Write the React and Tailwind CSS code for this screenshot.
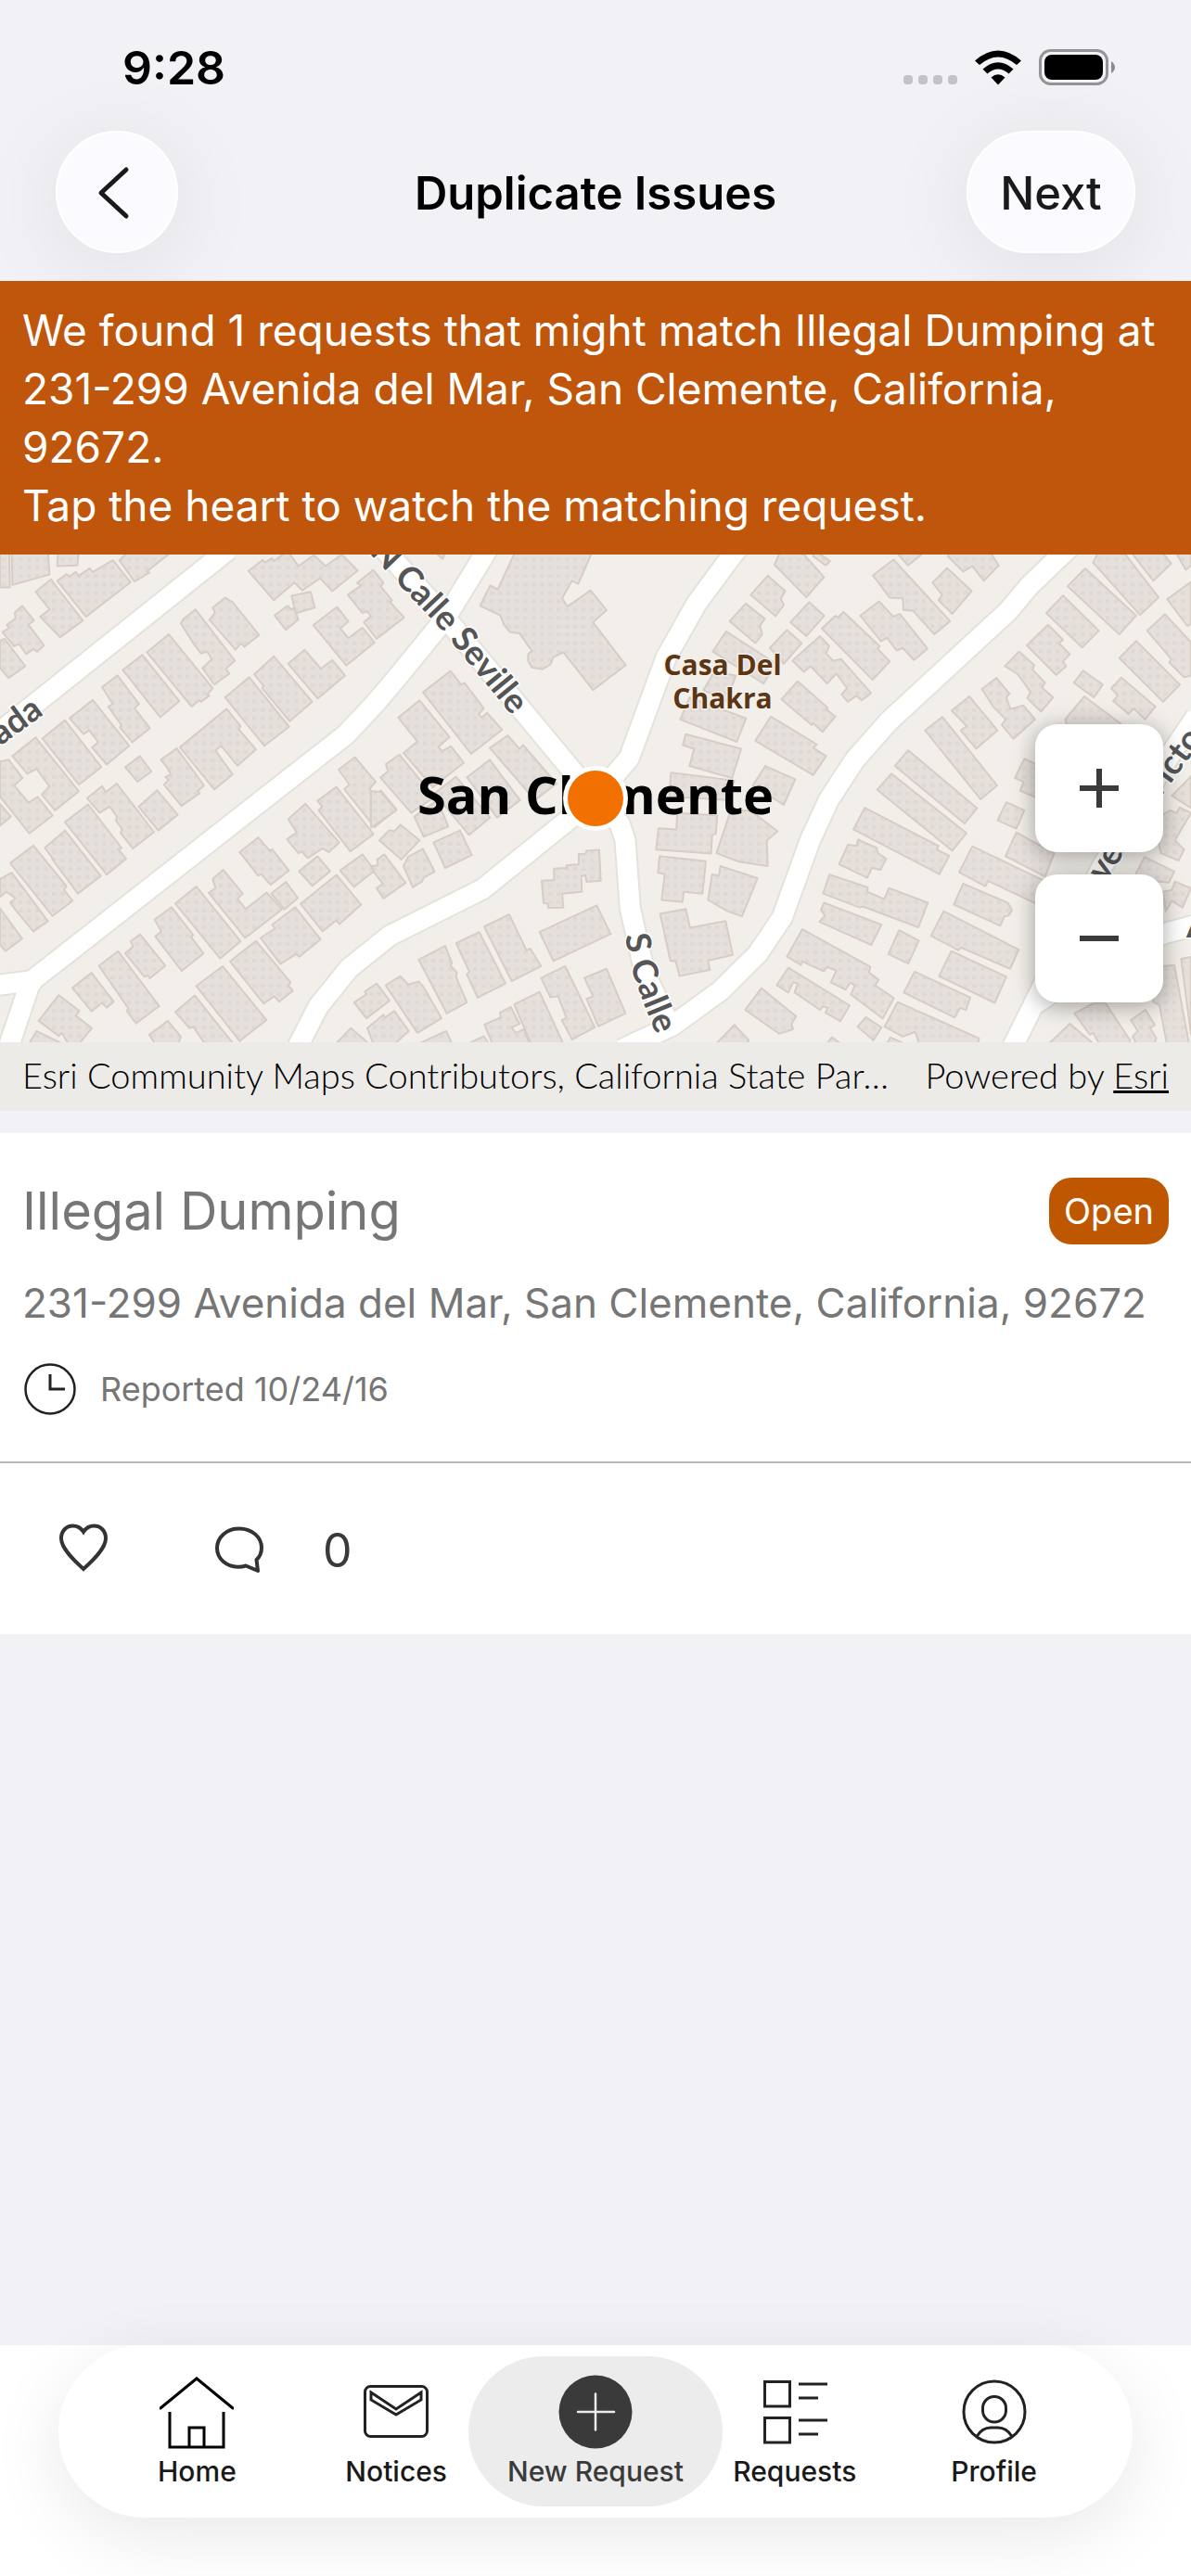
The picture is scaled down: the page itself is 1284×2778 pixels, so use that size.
const A = [
  "0,10 30,10 32,110 0,110", "38,10 155,10 160,75 40,103", "188,10 255,10 250,50 185,52",
  "115,122 165,88 180,105 268,200 195,246 165,220 130,190 160,170",
  "185,92 215,74 225,80 245,68 255,78 290,58 300,68 365,36 422,96 278,190",
  "386,36 420,10 560,10 475,66 483,70 435,94",
  "8,232 30,220 22,212 50,195 48,178 72,160 110,200 92,212 142,268 120,286 108,278 85,292 62,265 45,270",
  "0,255 15,250 82,325 28,357 0,330",
  "585,208 595,195 632,170 760,310 730,332 742,345 693,375 655,330 685,305 670,285 650,290 625,262",
  "677,198 695,180 688,165 728,138 752,150 838,240 790,272 780,262 762,280",
  "475,287 546,238 688,385 670,402 677,405 650,422 645,417 620,435",
  "397,335 460,294 580,420 518,464",
  "330,382 380,350 450,428 435,440 485,494 428,532 388,492 392,485 350,435 365,428",
  "225,467 300,417 418,542 345,593 298,547 318,532 288,500 270,510",
  "137,522 210,472 328,600 255,648",
  "40,570 115,519 255,666 178,718 135,675 160,652 118,605 88,618",
  "0,585 28,580 73,630 46,650 92,697 122,681 170,732 95,781 0,680",
  "0,700 35,735 0,760", "405,600 452,570 490,612 445,640",
  "282,685 330,652 342,668 378,645 498,777 430,822 390,780 395,770 375,745 378,735 355,708 322,725",
  "210,750 285,702 393,820 383,825 408,850 345,893", "145,820 210,773 326,897 252,945 168,850 175,855",
  "33,862 108,814 215,925 207,935 235,965 170,1006",
  "0,905 38,888 155,1020 108,1048 60,1000 33,970 50,958 20,940 0,955", "0,985 72,1068 18,1102 0,1085",
  "520,580 572,549 660,650 640,665 645,672 587,706 530,648 545,635 535,627 552,620 540,600",
  "582,546 733,441 778,488 772,497 828,552 768,596 715,542 697,555 752,620 693,661",
  "728,410 806,355 935,490 855,542", "822,347 886,298 1010,422 937,475 848,385 852,378",
  "932,318 985,280 1038,332 1075,308 1116,350 1028,413", "448,708 508,663 575,730 512,773",
  "803,65 850,35 857,42 880,30 886,38 930,10 965,52 1015,22 1053,52 1105,20 1157,64 1075,120 1035,85 978,118 952,97 886,145",
  "943,133 1005,122 1018,165 957,180", "888,186 930,160 942,170 950,167 965,197 925,226",
  "1013,213 1090,163 1127,203 1100,222 1127,248 1172,220 1212,260 1120,323",
  "1125,130 1167,105 1155,98 1207,62 1240,97 1232,108 1268,145 1262,150 1307,192 1218,250 1177,205 1200,188 1187,175 1172,180",
  "775,832 835,792 872,828 880,824 935,882 875,921 845,892 835,896",
  "688,905 722,880 785,945 768,960 795,987 862,942 912,988 793,1066 675,943 697,930",
  "567,972 635,926 778,1075 712,1122", "500,1016 555,982 625,1058 618,1063 658,1108 588,1156 502,1062 522,1048",
  "405,1108 430,1090 423,1075 453,1056 535,1142 485,1176 478,1168 467,1172",
  "320,1142 382,1102 515,1252 440,1299 410,1265 415,1258", "234,1202 296,1161 368,1240 345,1256 330,1243 296,1266",
  "125,1292 190,1222 257,1265 245,1278 297,1312 250,1360 225,1360 200,1325 190,1333", "90,1360 118,1320 215,1360",
  "483,1330 543,1292 585,1335 575,1360 505,1360", "567,1268 630,1223 760,1360 660,1351 625,1308 613,1312",
  "635,1197 720,1143 862,1290 775,1347",
  "744,1130 828,1074 940,1187 932,1195 947,1210 903,1240 887,1225 853,1245",
  "843,1066 890,1040 880,1030 955,982 1037,1070 968,1117 957,1110 907,1137", "877,945 925,913 963,957 920,988",
  "972,973 1088,894 1168,975 1098,1028 1087,1018 1043,1048", "967,884 1027,843 1068,884 1010,924",
  "1100,882 1172,838 1212,882 1145,927",
  "932,742 988,700 1097,806 1063,832 1043,822 995,848 975,830 965,835 928,797 960,778",
  "1027,692 1088,654 1208,783 1133,830 1030,718 1042,708",
  "1095,607 1148,573 1215,640 1195,660 1210,676 1232,664 1282,715 1212,764 1113,660 1130,648",
  "1145,1242 1185,1220 1180,1212 1218,1190 1260,1237 1185,1285", "1080,1360 1135,1312 1200,1360",
];

const B = [
  "200,10 237,20 232,32",
  "468,10 717,10 670,100 650,92 618,140 635,162 710,118 762,172 718,205 824,322 718,390 622,287 590,300 580,320 555,333 520,328 508,310 508,292 520,283 480,235 450,232 430,212 418,186 353,160 385,105 410,115",
  "168,396 257,338 292,375 302,370 365,440 348,455 358,465 375,452 424,498 324,564",
  "88,465 157,418 254,518 218,545 230,557 258,543 300,588 200,655 105,562 150,530",
  "30,628 55,612 48,592 92,566 205,682 130,725", "384,548 442,514 480,550 492,540 600,645 530,690",
  "310,628 384,580 482,690 408,738", "205,672 275,626 385,738 317,785", "140,735 215,690 250,762 170,790",
  "27,800 60,772 75,775 95,757 157,800 98,852", "202,805 288,773 326,840 240,875",
  "105,870 120,845 168,823 206,885 170,902 165,912 135,928",
  "0,870 22,868 20,852 43,838 112,916 40,958 18,930 38,918 12,890", "0,665 32,668 82,718 0,765",
  "552,910 592,908 592,877 632,875 632,868 672,865 672,838 695,836 697,828 738,826 743,910 697,913 693,895 680,897 682,940 618,945 622,983 573,984 572,973 558,970",
  "545,1050 730,977 775,1055 590,1129", "366,1035 447,1002 503,1100 515,1095 550,1143 455,1184",
  "275,1080 350,1050 435,1190 345,1229 310,1165 318,1158",
  "154,1125 240,1088 262,1135 257,1142 278,1160 275,1172 310,1242 245,1272",
  "47,1195 95,1170 120,1193 155,1185 170,1200 228,1285 150,1325",
  "-12,1312 40,1275 45,1283 75,1265 122,1320 70,1360 10,1360", "140,1360 243,1320 265,1360", "300,1360 365,1334 385,1360",
  "367,1302 420,1282 417,1270 452,1254 480,1300 455,1310 468,1325 495,1315 515,1360 395,1360",
  "463,1247 545,1213 625,1360 520,1360",
  "550,1175 628,1143 724,1310 650,1343 617,1290 632,1283 605,1225 580,1228",
  "690,1175 762,1150 823,1272 735,1307 697,1232 718,1225",
  "1228,130 1283,78 1340,120 1325,140 1335,158 1308,188", "1160,202 1212,154 1273,195 1258,215 1265,238 1243,262",
  "1105,285 1148,230 1310,318 1270,372", "1075,390 1110,340 1180,350 1150,420", "1000,470 1030,410 1213,467 1183,531",
  "1008,540 1018,510 1197,550 1168,630 1030,597 1045,550", "970,615 1175,637 1150,690 965,680",
  "1243,528 1293,462 1442,538 1430,548 1472,570 1430,622", "1235,650 1275,597 1372,633 1335,703",
  "990,725 1120,732 1115,782 1103,785 1100,836 922,825 930,767 988,770",
  "1165,715 1230,720 1315,775 1280,800 1283,870 1190,858 1117,835",
  "933,843 1083,857 1072,945 1012,940 1007,968 940,962 950,892 928,888",
  "1130,870 1250,903 1200,1007 1150,992 1090,962 1103,893 1125,896",
  "935,1000 1018,987 1032,1038 1147,1020 1170,1112 1090,1128 1096,1153 998,1170 985,1130 968,1128",
  "1210,1262 1263,1203 1375,1280 1360,1300 1365,1315 1320,1327", "1110,1360 1175,1303 1222,1345 1210,1360",
];

const C = [
  "15,48 35,10 110,20 175,82 118,137", "145,10 195,38 180,50 140,25", "66,205 127,150 176,187 118,243",
  "0,275 55,226 103,262 45,318",
  "73,310 162,243 192,270 182,290 205,310 230,305 327,398 297,418 280,405 252,422 232,402 250,385 215,345 185,372 132,325 110,340",
  "168,222 212,187 220,192 238,177 355,270 348,277 388,312 332,362",
  "292,187 353,148 400,190 420,182 510,277 466,308 430,275 410,282 378,247 360,257",
  "333,77 400,34 583,202 532,238 462,173 432,172 430,140 388,138", "415,20 485,10 490,20 447,50",
  "526,97 573,57 653,120 590,182 545,145 557,130", "575,25 590,10 710,10 740,50 692,92 655,52 625,67",
  "37,415 90,366 187,438 182,443 212,462 170,504 140,480 135,485", "588,446 645,407 736,500 667,550 617,500 637,488",
  "502,500 558,463 735,650 682,688", "404,597 447,554 670,712 630,754", "347,662 393,618 636,780 590,828",
  "270,770 307,711 545,815 540,825 580,842 548,892",
  "224,865 252,812 280,815 285,798 345,820 350,835 376,850 358,880 330,875 315,902",
  "172,945 193,893 317,928 315,940 370,960 385,930 511,970 480,1037 300,980 290,983",
  "175,970 361,1030 328,1085 160,1022 178,1005 165,990",
  "55,1117 105,1042 325,1145 320,1160 352,1180 340,1195 401,1230 365,1286 262,1220 275,1195 260,1188 245,1207 197,1187 215,1155 185,1145 175,1157 105,1130 100,1140",
  "22,1195 60,1147 258,1250 228,1293 180,1270 187,1257 172,1252 162,1262 80,1215 90,1190 75,1187 60,1215",
  "383,1110 418,1045 482,1073 448,1136", "284,1308 310,1282 361,1310 335,1345",
  "371,1308 413,1241 677,1340 670,1360 485,1360 470,1322 430,1335", "433,1215 468,1158 648,1228 635,1262 615,1257 598,1283",
  "180,1360 200,1337 240,1360", "375,1360 390,1337 450,1360",
  "547,1170 587,1102 765,1172 727,1243", "521,1060 562,993 805,1098 777,1150 618,1092 610,1100",
  "595,975 625,918 770,970 783,990 772,1005 758,1008 745,1033", "612,887 655,816 900,915 860,972 705,910 697,925",
  "736,745 765,696 823,718 797,768", "762,843 797,778 920,835 890,898", "792,630 823,577 880,600 880,690 810,665 820,640",
  "686,387 733,357 775,400 765,410 778,442 820,432 858,470 788,523 750,485 763,470 722,435",
  "760,325 806,285 855,322 850,335 890,370 880,383 916,410 877,449 832,412 843,395 800,345",
  "831,268 900,212 948,253 935,262 970,292 948,312 958,325 926,349", "894,180 948,132 1064,228 1010,274",
  "963,107 1020,58 1185,187 1130,238", "1045,42 1065,10 1150,20 1257,137 1197,185", "1165,10 1265,10 1298,45 1240,92",
  "1285,142 1362,95 1362,210 1350,215", "1220,228 1278,183 1362,260 1362,350 1340,355 1292,315 1298,305",
  "1130,303 1185,256 1326,375 1272,422",
  "1104,385 1137,356 1247,435 1213,470 1177,440 1160,455 1110,420 1125,405", "983,370 1013,337 1077,375 1048,410",
  "955,470 1017,407 1140,485 960,485", "1310,10 1362,10 1362,50 1345,62", "1300,678 1362,625 1362,712",
  "1240,745 1295,718 1315,725 1325,710 1362,725 1310,800 1340,825 1322,855 1265,835", "1185,888 1212,845 1308,885 1290,915 1180,905",
  "1272,940 1300,935 1310,912 1362,930 1335,983 1300,965 1280,993",
  "1240,1240 1250,1145 1308,1140 1357,1360 1285,1360 1260,1250", "1330,1123 1362,1118 1362,1330",
  "985,1272 1050,1243 1085,1243 1165,1345 1160,1360 1070,1360 1045,1325 1035,1330",
  "1167,1290 1215,1262 1245,1303 1230,1312 1250,1340 1240,1360 1190,1360 1173,1335 1190,1320",
  "895,1360 970,1300 1055,1360",
];

const ROADS = [
  "M740,6 L-20,517",
  "M1595,-20 L1560,30 L1440,195 L1290,350 L1215,425 L1118,512 L110,1178 L95,1195 L25,1370",
  "M-20,1196 L110,1182",
  "M1215,-20 L1440,192 L1925,685",
  "M2395,-5 L2370,20 L2252,155 L2155,300 L2035,575 L1925,685 L1562,932 L1260,1060 L1130,1148 L1030,1252 L940,1400",
  "M1925,685 L2005,755 L2022,800 L2038,985 L2085,1160 L2175,1320",
  "M2010,1370 L2175,1305 L2330,1210 L2450,1110 L2530,1010 L2620,800 L2680,690 L2765,580 L2875,475 L3260,175 L3330,105 L3460,0",
  "M3265,1380 L3350,1235 L3565,870 L3790,560 L3870,460",
  "M3350,1245 L3450,1190 L3762,1055 L3870,1030",
];

function Blocks({ items, shift }) {
  return (
    <g transform={`translate(${shift} 0)`}>
      {items.map((p) => (
        <polygon key={p} points={p} fill="url(#hatch)" stroke="#d8cdc5" strokeWidth="2" vectorEffect="non-scaling-stroke" />
      ))}
    </g>
  );
}

function StreetMap() {
  return (
    <svg viewBox="0 0 1284 526" preserveAspectRatio="xMidYMid slice" className="block h-[526px] w-full bg-[#f2efea]" role="img" aria-label="Map of San Clemente">
      <defs>
        <pattern id="hatch" width="27" height="22.8" patternUnits="userSpaceOnUse">
          <rect width="27" height="22.8" fill="#e5e0db" />
          <rect x="6" y="6" width="13" height="10" fill="#ded9d4" />
        </pattern>
        <path id="seville" d="M388,-28 L480,69 L573,182 L642,253" />
        <path id="calle" d="M682,395 L690,440 L704,480 L735,556" />
        <path id="victoria" d="M1174,362 L1230,272 L1320,150" />
      </defs>
      <g transform="translate(0 -8) scale(0.33333 0.39541)" strokeLinejoin="round">
        {ROADS.map((d) => (
          <path key={d} d={d} fill="none" stroke="#e3e2dc" strokeWidth="25" vectorEffect="non-scaling-stroke" />
        ))}
        {ROADS.map((d) => (
          <path key={d} d={d} fill="none" stroke="#ffffff" strokeWidth="21" vectorEffect="non-scaling-stroke" />
        ))}
        <Blocks items={A} shift={0} />
        <Blocks items={B} shift={1200} />
        <Blocks items={C} shift={2490} />
      </g>
      <g className="font-['Lato',sans-serif] text-[37px] font-bold" fill="#555555" stroke="#ffffff" strokeWidth="3" paintOrder="stroke">
        <text dy="11"><textPath href="#seville" startOffset="26">N Calle Seville</textPath></text>
        <text dy="11"><textPath href="#calle" startOffset="14">S Calle</textPath></text>
        <text dy="11"><textPath href="#victoria" startOffset="16">ve</textPath></text>
        <text dy="11"><textPath href="#victoria" startOffset="118">Victoria</textPath></text>
        <text x="48" y="172" textAnchor="end" transform="rotate(-36 48 172)">ada</text>
        <text x="1279" y="413">A</text>
      </g>
      <g className="font-['Open_Sans',sans-serif] text-[30px] font-bold" fill="#5c3512" stroke="#f2efea" strokeWidth="3" paintOrder="stroke" textAnchor="middle">
        <text x="779" y="130">Casa Del</text>
        <text x="779" y="166">Chakra</text>
      </g>
      <text x="642" y="280" textAnchor="middle" className="font-['Open_Sans',sans-serif] text-[56px] font-bold" fill="#000000">San Clemente</text>
      <circle cx="642" cy="263" r="35" fill="#ffffff" />
      <circle cx="642" cy="263" r="30" fill="#f27000" />
    </svg>
  );
}

function StatusBar() {
  return (
    <div className="flex h-[141px] items-start justify-between pt-[42px] pr-[82px] pl-[132px]">
      <time className="text-[50px] leading-[62px] font-semibold">9:28</time>
      <div className="flex h-[62px] items-center gap-[19px]">
        <svg viewBox="0 0 58 40" className="h-10 w-[58px]" aria-hidden="true">
          {[0, 16, 32, 48].map((x) => (
            <rect key={x} x={x} y="28" width="10" height="10" rx="4" fill="#c3c2c7" />
          ))}
        </svg>
        <svg viewBox="0 0 50 38" className="h-[38px] w-[50px]" aria-hidden="true">
          <path d="M0 11.500 Q25 -10.500 50 11.500 L45 16 Q25 -1 5 16 Z" />
          <path d="M8.500 20.500 Q25 6 41.500 20.500 L36.500 25.500 Q25 15.500 13.500 25.500 Z" />
          <path d="M17.500 29.500 Q25 23 32.500 29.500 L25 37.500 Z" />
        </svg>
        <svg viewBox="0 0 82 40" className="h-10 w-[82px]" aria-hidden="true">
          <rect x="1.500" y="1.500" width="72" height="36" rx="11" fill="none" stroke="#949397" strokeWidth="3" />
          <rect x="6" y="6" width="63" height="27" rx="8" />
          <path d="M78 13 Q82 16 82 19.500 Q82 23 78 26 Z" fill="#8b8a8e" />
        </svg>
      </div>
    </div>
  );
}

function HomeIcon() {
  return (
    <svg viewBox="0 0 80 80" className="size-20" fill="none" stroke="#000" strokeWidth="3" aria-hidden="true">
      <path d="M1 36 L40 4 L79 36" strokeLinecap="round" />
      <path d="M11 40 V78 H69 V40 M32 78 V57 H48 V78" />
    </svg>
  );
}

function NoticesIcon() {
  return (
    <svg viewBox="0 0 80 80" className="size-20" fill="none" stroke="#222" strokeWidth="3" aria-hidden="true">
      <rect x="6.500" y="12.500" width="67" height="54" rx="6" />
      <path d="M13 19 L40 37 L67 19 V27 L40 43 L13 27 Z" />
    </svg>
  );
}

function NewIcon() {
  return (
    <svg viewBox="0 0 80 80" className="size-20" aria-hidden="true">
      <circle cx="40" cy="40" r="39.500" fill="#3a3a3a" />
      <path d="M21 40 H60 M40 20.500 V59.500" stroke="#ececec" strokeWidth="2.500" strokeLinecap="round" />
    </svg>
  );
}

function RequestsIcon() {
  return (
    <svg viewBox="0 0 80 80" className="size-20" fill="none" stroke="#222" strokeWidth="3" aria-hidden="true">
      <path d="M7.500 7.500 H34.500 V34 H7.500 Z M7.500 46.500 H34.500 V73 H7.500 Z" />
      <path d="M44 10 H75 M44 25 H65 M44 49 H75 M44 64 H65" />
    </svg>
  );
}

function ProfileIcon() {
  return (
    <svg viewBox="0 0 80 80" className="size-20" fill="none" stroke="#222" strokeWidth="3" aria-hidden="true">
      <circle cx="40" cy="40" r="33" />
      <rect x="27.500" y="23.500" width="25" height="27.500" rx="12.500" />
      <path d="M21 66.500 C25 60 29 57 36 57 H44 C51 57 55 60 59 66.500" />
    </svg>
  );
}

const TABS = [
  { name: "Home", Icon: HomeIcon },
  { name: "Notices", Icon: NoticesIcon },
  { name: "New Request", Icon: NewIcon, active: true },
  { name: "Requests", Icon: RequestsIcon },
  { name: "Profile", Icon: ProfileIcon },
];

export default function App() {
  return (
    <div className="flex min-h-screen flex-col overflow-hidden bg-[#f2f1f6] font-['Inter',sans-serif] text-black">
      <StatusBar />
      <header className="flex items-center justify-between px-[60px] pb-[30px]">
        <div className="flex flex-1">
          <button type="button" aria-label="Back" className="grid size-[132px] place-items-center rounded-full border-2 border-white bg-[#fafaff] shadow-[0_12px_100px_rgba(0,0,0,0.08)]">
            <svg viewBox="0 0 40 60" className="mr-2 h-[60px] w-10" fill="none" stroke="#1a1a1c" strokeWidth="5" strokeLinecap="round" strokeLinejoin="round" aria-hidden="true">
              <path d="M34 6 L7 31 L34 56" />
            </svg>
          </button>
        </div>
        <h1 className="pt-1 text-[49px] leading-[60px] font-semibold">Duplicate Issues</h1>
        <div className="flex flex-1 justify-end">
          <button type="button" className="h-[132px] w-[182px] rounded-full border-2 border-white bg-[#fafaff] pt-1 text-[49px] font-medium text-[#1a1a1c] shadow-[0_12px_100px_rgba(0,0,0,0.08)]">Next</button>
        </div>
      </header>

      <main className="flex-1">
        <p className="bg-[#c0560c] px-6 pt-[22px] pb-[21px] text-[46px] leading-[63px] text-white">
          We found 1 requests that might match Illegal Dumping at 231-299 Avenida del Mar, San Clemente, California, 92672.
          <br />
          Tap the heart to watch the matching request.
        </p>

        <section className="relative" aria-label="Map">
          <StreetMap />
          <div className="absolute right-[30px] bottom-[117px] flex flex-col gap-6">
            <button type="button" aria-label="Zoom in" className="grid size-[138px] place-items-center rounded-3xl bg-white shadow-[0_4px_24px_rgba(0,0,0,0.35)]">
              <svg viewBox="0 0 42 42" className="size-[42px]" stroke="#3a3a3a" strokeWidth="6" aria-hidden="true"><path d="M0 21 H42 M21 0 V42" /></svg>
            </button>
            <button type="button" aria-label="Zoom out" className="grid size-[138px] place-items-center rounded-3xl bg-white shadow-[0_4px_24px_rgba(0,0,0,0.35)]">
              <svg viewBox="0 0 42 42" className="size-[42px]" stroke="#3a3a3a" strokeWidth="6" aria-hidden="true"><path d="M0 21 H42" /></svg>
            </button>
          </div>
          <div className="flex h-[74px] items-center justify-between gap-6 bg-[#edebe8] px-6 pb-1 font-['Lato',sans-serif] text-[38px] font-light">
            <span className="truncate">Esri Community Maps Contributors, California State Par…</span>
            <span className="whitespace-nowrap">Powered by <a href="#esri" className="underline">Esri</a></span>
          </div>
        </section>

        <article className="mt-6 bg-white">
          <div className="px-6 pt-12 pb-12 text-[#767676]">
            <div className="flex items-center justify-between">
              <h2 className="text-[56px] leading-[72px]">Illegal Dumping</h2>
              <span className="rounded-3xl bg-[#bf5700] px-4 text-[38px] leading-[72px] text-white">Open</span>
            </div>
            <p className="mt-8 text-[44px] leading-[62px]">231-299 Avenida del Mar, San Clemente, California, 92672</p>
            <div className="mt-8 flex items-center gap-6">
              <svg viewBox="0 0 60 60" className="size-[60px]" fill="none" stroke="#222" strokeWidth="2.500" aria-hidden="true">
                <circle cx="30" cy="30" r="26.500" />
                <path d="M30 14 V30 H46" strokeWidth="3" />
              </svg>
              <p className="text-[36px] leading-[60px]">Reported 10/24/16</p>
            </div>
          </div>
          <div className="flex h-[186px] items-center border-t-2 border-[#b8b8b8] px-[60px]">
            <button type="button" aria-label="Watch" className="mr-[108px]">
              <svg viewBox="0 0 60 60" className="size-[60px]" fill="none" stroke="#333" strokeWidth="4" aria-hidden="true">
                <path d="M30 52 C20 43 6 30 6 19 C6 11 11.500 5.500 18.500 5.500 C23.500 5.500 27.500 8 30 12 C32.500 8 36.500 5.500 41.500 5.500 C48.500 5.500 54 11 54 19 C54 30 40 43 30 52 Z" />
              </svg>
            </button>
            <button type="button" aria-label="Comments" className="flex items-center gap-[60px] text-[50px] text-[#3a3a3a]">
              <svg viewBox="0 0 60 60" className="size-[60px]" fill="none" stroke="#333" strokeWidth="4" strokeLinejoin="round" aria-hidden="true">
                <path d="M30 8.500 C44 8.500 54 18 54 29 C54 34.500 52 39 48.500 42 L50 54 L37 48.500 C34 49.500 33 49.800 30 49.800 C16 49.800 6 41 6 29.500 C6 18 16 8.500 30 8.500 Z" />
              </svg>
              <span className="pt-1">0</span>
            </button>
          </div>
        </article>
      </main>

      <footer className="bg-white px-[63px] pb-[63px]">
        <nav className="grid grid-cols-5 rounded-full bg-white px-[42px] py-3 shadow-[0_20px_80px_rgba(0,0,0,0.09)]">
          {TABS.map(({ name, Icon, active }) => (
            <a key={name} href={`#${name}`} className="relative flex h-[162px] flex-col items-center pt-5">
              {active && <span className="absolute -inset-x-[30px] inset-y-0 rounded-full bg-[#ececec]" />}
              <span className="relative"><Icon /></span>
              <span className={`relative mt-1 text-[30px] leading-10 font-medium whitespace-nowrap ${active ? "text-[#3a3a3a]" : "text-[#1a1a1a]"}`}>{name}</span>
            </a>
          ))}
        </nav>
      </footer>
    </div>
  );
}
